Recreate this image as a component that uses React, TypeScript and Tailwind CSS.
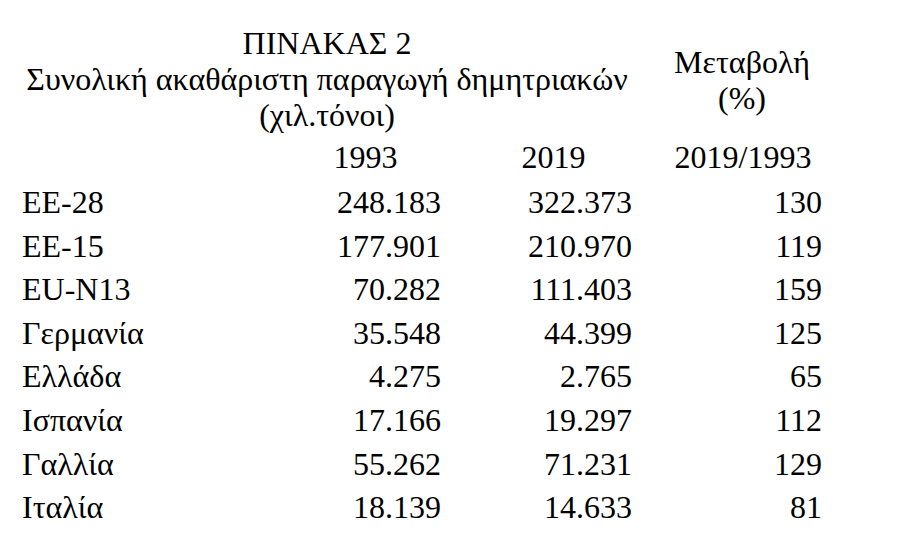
import React from 'react'

const rows: [string, string, string, string][] = [
  ['ΕΕ-28', '248.183', '322.373', '130'],
  ['ΕΕ-15', '177.901', '210.970', '119'],
  ['EU-N13', '70.282', '111.403', '159'],
  ['Γερμανία', '35.548', '44.399', '125'],
  ['Ελλάδα', '4.275', '2.765', '65'],
  ['Ισπανία', '17.166', '19.297', '112'],
  ['Γαλλία', '55.262', '71.231', '129'],
  ['Ιταλία', '18.139', '14.633', '81'],
]

export default function App() {
  return (
    <div className="w-[907px] h-[536px] bg-white text-black text-[32px] pl-[22px] pt-[25px] font-['Liberation_Serif','Times_New_Roman',serif]">
      <div className="grid grid-cols-[268px_151px_191px_190px]">
        {/* title */}
        <div className="col-span-3 text-center leading-[36px]">
          <div>ΠΙΝΑΚΑΣ 2</div>
          <div>Συνολική ακαθάριστη παραγωγή δημητριακών</div>
          <div>(χιλ.τόνοι)</div>
        </div>
        <div className="text-center leading-[36px] pt-[19px] pl-[30px]">
          <div>Μεταβολή</div>
          <div>(%)</div>
        </div>

        {/* years */}
        <div className="h-[48px] leading-[48px]" />
        <div className="h-[48px] leading-[48px] text-center">1993</div>
        <div className="h-[48px] leading-[48px] text-center pl-[34px]">2019</div>
        <div className="h-[48px] leading-[48px] text-center pl-[32px]">2019/1993</div>

        {rows.map(([name, a, b, c]) => (
          <React.Fragment key={name}>
            <div className="h-[43.6px] leading-[43.6px]">{name}</div>
            <div className="h-[43.6px] leading-[43.6px] text-right">{a}</div>
            <div className="h-[43.6px] leading-[43.6px] text-right">{b}</div>
            <div className="h-[43.6px] leading-[43.6px] text-right">{c}</div>
          </React.Fragment>
        ))}
      </div>
    </div>
  )
}
